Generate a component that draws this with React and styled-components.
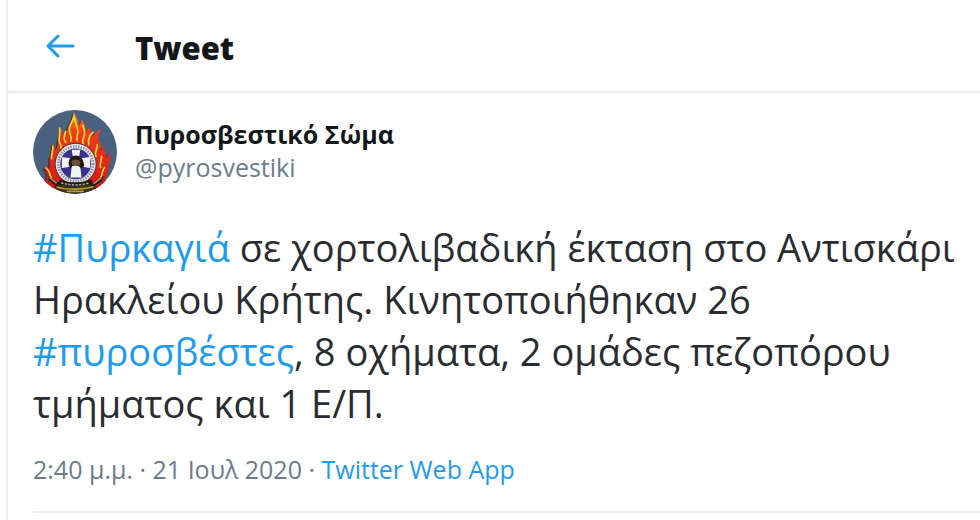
import React from 'react'
import styled, { createGlobalStyle, ThemeProvider } from 'styled-components'

const theme = {
    colors: {
        text: '#14171a',
        body: '#292c30',
        muted: '#6b7c8a',
        link: '#1d9bf0',
        border: '#e9eff3',
    },
}

const GlobalStyle = createGlobalStyle`
    *{
        box-sizing:border-box;
    }
    body{
        margin:0;
        background:#fff;
        color:${({ theme }) => theme.colors.text};
        font-family:"Open Sans", "Noto Sans", sans-serif;
    }
`
const Column = styled.main`
    margin-left:6px;
    min-height:100vh;
    border-left:2px solid ${({ theme }) => theme.colors.border};
`
const Header = styled.header`
    display:flex;
    align-items:center;
    gap:60px;
    height:93px;
    padding:4px 37px 0;
    border-bottom:2px solid ${({ theme }) => theme.colors.border};
`
const BackButton = styled.button`
    display:flex;
    padding:0 0 4px;
    border:none;
    background:none;
    color:${({ theme }) => theme.colors.link};
    cursor:pointer;
`
const Title = styled.h1`
    margin:0;
    font-size:31px;
    line-height:40px;
    font-weight:800;
`
const Article = styled.article`
    margin-left:25px;
    padding-top:17px;
    border-bottom:2px solid ${({ theme }) => theme.colors.border};
`
const Author = styled.div`
    display:flex;
    gap:18px;
`
const Names = styled.div`
    display:flex;
    flex-direction:column;
    padding-top:8px;
    line-height:33px;
`
const Name = styled.a`
    color:inherit;
    font-size:25px;
    font-weight:700;
    text-decoration:none;
`
const Handle = styled.span`
    color:${({ theme }) => theme.colors.muted};
    font-size:25px;
`
const Text = styled.p`
    margin:27px 0 0;
    color:${({ theme }) => theme.colors.body};
    font-size:38px;
    line-height:52px;
`
const Link = styled.a`
    color:${({ theme }) => theme.colors.link};
    text-decoration:none;
`
const Meta = styled.div`
    padding:22px 0 24px;
    color:${({ theme }) => theme.colors.muted};
    font-size:25px;
    line-height:36px;
`

const BackIcon = () => (
    <svg width="30" height="26" viewBox="0 0 30 26" fill="none" stroke="currentColor" strokeWidth="3" strokeLinecap="round" strokeLinejoin="round">
        <path d="M13 3 3 13l10 10M3 13h25" />
    </svg>
)

const Avatar = () => (
    <svg width="84" height="84" viewBox="22 17 256 256" role="img" aria-label="Πυροσβεστικό Σώμα">
        <defs>
            <clipPath id="round"><circle cx="150" cy="145" r="128" /></clipPath>
            <linearGradient id="fire" x1="0" y1="0" x2="0" y2="1">
                <stop offset="0" stopColor="#f59a1b" />
                <stop offset="0.25" stopColor="#ec3f1c" />
                <stop offset="1" stopColor="#d9141a" />
            </linearGradient>
        </defs>
        <g clipPath="url(#round)">
            <rect x="22" y="17" width="256" height="256" fill="#4a6180" />
            <path d="M66 252C54 235 70 222 64 208c-3-8-9-10-8-18 8 3 11 8 15 4 7-8-4-22 5-40 6-12 2-25 6-35 6 6 4 17 9 18 10-8 4-24 12-42 3-7 1-16 5-22 6 9 2 20 10 22 10-6 6-22 17-36 9-12 6-22 13-35 4 18 13 22 14 40 6-5 5-13 10-17 4 12 12 22 12 36 4-4 4-12 14-10-4 10 2 17 4 27 7-14 18-20 28-25-10 16-7 22-8 34 6 10 10 21 4 34 8-3 6-15 14-17-4 14 6 20 3 36 6 0 8-12 16-14-4 12 1 20-5 30-6 10 4 18-8 38l-10 40H85z" fill="#4b3430" transform="translate(-5 4)" />
            <path d="M66 252C54 235 70 222 64 208c-3-8-9-10-8-18 8 3 11 8 15 4 7-8-4-22 5-40 6-12 2-25 6-35 6 6 4 17 9 18 10-8 4-24 12-42 3-7 1-16 5-22 6 9 2 20 10 22 10-6 6-22 17-36 9-12 6-22 13-35 4 18 13 22 14 40 6-5 5-13 10-17 4 12 12 22 12 36 4-4 4-12 14-10-4 10 2 17 4 27 7-14 18-20 28-25-10 16-7 22-8 34 6 10 10 21 4 34 8-3 6-15 14-17-4 14 6 20 3 36 6 0 8-12 16-14-4 12 1 20-5 30-6 10 4 18-8 38l-10 40H85z" fill="url(#fire)" />
            <g fill="none" stroke="#ffd72e" strokeWidth="5" strokeLinecap="round">
                <path d="M147 34c-2 18-16 30-14 46 1 13 10 18 4 32" />
                <path d="M149 42c0 18 12 30 10 43-1 10-6 14-2 26" />
                <path d="M103 72c4 15-4 29-1 41 2 9 8 11 5 20" />
                <path d="M82 128c3 16-6 22-3 37" />
                <path d="M174 64c6 15 8 24 3 35-3 8-6 14-2 20" />
                <path d="M204 85c-13 12-15 22-12 38" />
                <path d="M218 122c2 15-11 23-4 37M231 158c1 14-7 20-3 34" />
                <path d="M62 194c14 10 8 18 16 30M240 192c-10 12-4 22-14 36" />
                <path d="M122 82c-6 14-8 25 0 34" />
            </g>
            <circle cx="152" cy="181" r="64" fill="#50323c" />
            <circle cx="152" cy="181" r="61" fill="#e3e3e6" />
            <circle cx="152" cy="181" r="53" fill="none" stroke="#8b8b94" strokeWidth="8" strokeDasharray="4 4" />
            <circle cx="152" cy="181" r="47" fill="#35318c" />
            <path d="M140 138h26l-4 27 34-5v34l-30-5 4 34h-34l4-34-30 5v-34l34 5z" fill="#f3f3f6" />
            <path d="M131 185c-2-19 8-29 22-29 15 0 23 13 25 31l-8 9-9-8-9-2-10 2-6 7z" fill="#201915" />
            <path d="M139 174c7-9 21-8 28 2l-4 11c-7-4-15-4-21 0z" fill="#705039" />
            <path d="M70 218l28 20h108l32-20-5 15-26 18H95l-26-20z" fill="#211d16" />
            <path d="M72 222l22 18M230 224l-24 18" stroke="#a89455" strokeWidth="5" />
            <path d="M104 229q46 18 94 0l6 13q-54 20-106 0z" fill="#1c1a18" />
            <path d="M108 239q44 13 86 0" fill="none" stroke="#aaa37e" strokeWidth="5" strokeDasharray="7 4" />
            <path d="M85 251l25-7 40 6 42-7 28 10-27 15-43 6-44-7z" fill="#39301a" />
            <path d="M94 252l24 5 32 1 33-2 24-6M125 265h52" fill="none" stroke="#b79a35" strokeWidth="5" />
        </g>
    </svg>
)

export default function App() {
    return (
        <ThemeProvider theme={theme}>
            <GlobalStyle />
            <Column>
                <Header>
                    <BackButton aria-label="Back"><BackIcon /></BackButton>
                    <Title>Tweet</Title>
                </Header>
                <Article>
                    <Author>
                        <Avatar />
                        <Names>
                            <Name href="#pyrosvestiki">Πυροσβεστικό Σώμα</Name>
                            <Handle>@pyrosvestiki</Handle>
                        </Names>
                    </Author>
                    <Text>
                        <Link href="#fire">#Πυρκαγιά</Link> σε χορτολιβαδική έκταση στο Αντισκάρι Ηρακλείου Κρήτης. Κινητοποιήθηκαν 26{' '}
                        <Link href="#firefighters">#πυροσβέστες</Link>, 8 οχήματα, 2 ομάδες πεζοπόρου τμήματος και 1 Ε/Π.
                    </Text>
                    <Meta>
                        2:40 μ.μ. · 21 Ιουλ 2020 · <Link href="#source">Twitter Web App</Link>
                    </Meta>
                </Article>
            </Column>
        </ThemeProvider>
    )
}
